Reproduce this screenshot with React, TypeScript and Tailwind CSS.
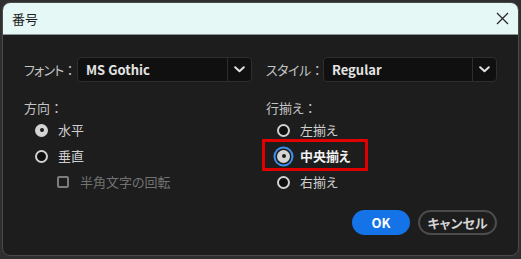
import React from "react";

const FONT = "font-['Noto_Sans_CJK_JP','Noto_Sans',sans-serif] [font-feature-settings:'palt']";

function Colon() {
  return <span className="[font-feature-settings:normal] tracking-normal">：</span>;
}

function Chevron() {
  return (
    <svg width="11" height="7" viewBox="0 0 11 7" fill="none">
      <path d="M1.2 1.2 L5.5 5.3 L9.8 1.2" stroke="#e0e0e0" strokeWidth="2" strokeLinecap="round" strokeLinejoin="round" />
    </svg>
  );
}

function Dropdown({ value }: { value: string }) {
  return (
    <div className="flex-1 h-[25px] flex rounded-[4px] border border-[#2e2e2e] bg-[#101010]">
      <div className="flex-1 flex items-center pl-[8px] text-[13px] font-semibold text-[#e4e4e4]">{value}</div>
      <div className="w-[24px] flex items-center justify-center border-l border-[#2e2e2e]">
        <Chevron />
      </div>
    </div>
  );
}

function Radio({ checked, focus }: { checked?: boolean; focus?: boolean }) {
  const base = "w-[13px] h-[13px] rounded-full flex items-center justify-center shrink-0";
  const style = checked
    ? "bg-[#d4d4d4]"
    : "border-2 border-[#d0d0d0] bg-[#0e0e0e]";
  const ring = focus ? " ring-2 ring-[#3b8ff0] ring-offset-[1.5px] ring-offset-[#1d1d1d]" : "";
  return (
    <span className={base + " " + style + ring}>
      {checked && <span className="w-[4px] h-[4px] rounded-full bg-[#1a1a1a]" />}
    </span>
  );
}

function RadioRow({ label, checked, focus, bold }: { label: string; checked?: boolean; focus?: boolean; bold?: boolean }) {
  return (
    <div className="h-[26px] flex items-center pl-[11px]">
      <Radio checked={checked} focus={focus} />
      <span className={"ml-[10px] text-[13px] " + (bold ? "font-bold text-[#f2f2f2]" : "text-[#cfcfcf]")}>{label}</span>
    </div>
  );
}

export default function App() {
  return (
    <div className={"w-[521px] h-[259px] bg-[#2f2f2f] p-[2px] " + FONT}>
      <div className="w-[517px] h-[254px] rounded-[8px] border border-[#4a4a4a] overflow-hidden flex flex-col bg-[#1d1d1d]">
        <div className="h-[32px] shrink-0 bg-[#e6f8f5] border-b border-[#8c9695] flex items-center justify-between pl-[9px] pr-[9px]">
          <span className="text-[13px] text-[#1e1e1e]">番号</span>
          <svg width="13" height="13" viewBox="0 0 13 13" fill="none">
            <path d="M1 1 L12 12 M12 1 L1 12" stroke="#2a2a2a" strokeWidth="1.3" />
          </svg>
        </div>
        <div className="flex-1 pt-[22px] pl-[21px] pr-[21px] flex flex-col">
          <div className="flex">
            <div className="w-[228px] flex flex-col">
              <div className="flex items-center">
                <span className="w-[53px] text-[13px] text-[#c4c4c4] whitespace-nowrap"><span className="tracking-[-0.8px]">フォント</span><Colon /></span>
                <Dropdown value="MS Gothic" />
              </div>
              <div className="mt-[17px] h-[18px] flex items-center text-[13px] text-[#c4c4c4]">方向<Colon /></div>
              <RadioRow label="水平" checked />
              <RadioRow label="垂直" />
              <div className="h-[26px] flex items-center pl-[33px]">
                <span className="w-[12px] h-[12px] border-2 border-[#7c7c7c] rounded-[2px] shrink-0" />
                <span className="ml-[11px] text-[13px] text-[#727272]">半角文字の回転</span>
              </div>
            </div>
            <div className="w-[14px]" />
            <div className="flex-1 flex flex-col">
              <div className="flex items-center">
                <span className="w-[57px] text-[13px] text-[#c4c4c4] whitespace-nowrap"><span className="tracking-[-0.5px]">スタイル</span><Colon /></span>
                <Dropdown value="Regular" />
              </div>
              <div className="mt-[17px] h-[18px] flex items-center text-[13px] text-[#c4c4c4]">行揃え<Colon /></div>
              <RadioRow label="左揃え" />
              <div className="relative">
                <RadioRow label="中央揃え" checked focus bold />
                <span className="absolute left-[-4px] top-[-4px] w-[106px] h-[32px] border-[3px] border-[#e00000]" />
              </div>
              <RadioRow label="右揃え" />
            </div>
          </div>
          <div className="mt-[15px] flex justify-end gap-[8px]">
            <button className="w-[58px] h-[25px] rounded-full bg-[#1473e6] text-white text-[13px] font-bold flex items-center justify-center">OK</button>
            <button className="w-[79px] h-[25px] rounded-full border-2 border-[#4c4c4c] text-[#d4d4d4] text-[13px] font-bold flex items-center justify-center">キャンセル</button>
          </div>
        </div>
      </div>
    </div>
  );
}
